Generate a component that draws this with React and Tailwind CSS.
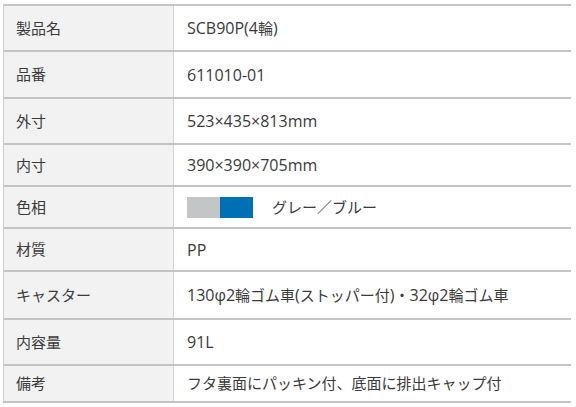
function Mixed({ text }) {
  const parts = text.split(/([\x20-\x7Eφ×]+)/).filter((p) => p.length);
  return (
    <span>
      {parts.map((p, i) =>
        /^[\x20-\x7Eφ×]+$/.test(p) ? (
          <span key={i} className="text-[16px]">{p}</span>
        ) : (
          <span key={i}>{p}</span>
        )
      )}
    </span>
  );
}

export default function App() {
  const rows = [
    { label: "製品名", value: "SCB90P(4輪)", h: "h-[46px]" },
    { label: "品番", value: "611010-01", h: "h-[47px]" },
    { label: "外寸", value: "523×435×813mm", h: "h-[46px]" },
    { label: "内寸", value: "390×390×705mm", h: "h-[42px]" },
    { label: "色相", value: "color", h: "h-[42px]" },
    { label: "材質", value: "PP", h: "h-[43px]" },
    { label: "キャスター", value: "130φ2輪ゴム車(ストッパー付)・32φ2輪ゴム車", h: "h-[48px]" },
    { label: "内容量", value: "91L", h: "h-[46px]" },
    { label: "備考", value: "フタ裏面にパッキン付、底面に排出キャップ付", h: "h-[37px]" },
  ];
  return (
    <div
      className="w-[576px] h-[407px] bg-white pt-[4px] pl-[3px] pr-[5px] text-[15px] text-[#3a3a3a]"
      style={{ fontFamily: '"Open Sans", "Noto Sans CJK JP", sans-serif' }}
    >
      <div className="border-l border-[#d0d0d0] border-b-2 border-b-[#c4c4c4]">
        {rows.map((r, i) => (
          <div key={i} className={`flex border-t-2 border-[#c4c4c4] ${r.h}`}>
            <div className="w-[170px] bg-[#f2f2f2] border-r border-[#d4d4d4] flex items-center pl-[12px]">
              {r.label}
            </div>
            <div className="flex-1 flex items-center pl-[13px]">
              {r.value === "color" ? (
                <div className="flex items-center">
                  <div className="w-[33px] h-[21px] bg-[#c3c6c7]" />
                  <div className="w-[33px] h-[21px] bg-[#0070b6]" />
                  <span className="ml-[19px]">グレー／ブルー</span>
                </div>
              ) : (
                <Mixed text={r.value} />
              )}
            </div>
          </div>
        ))}
      </div>
    </div>
  );
}
